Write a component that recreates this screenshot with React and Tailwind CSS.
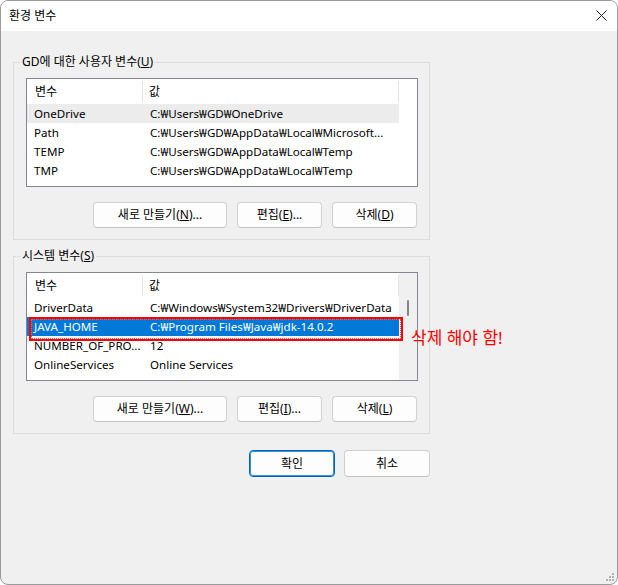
import React from "react";

const userVars = [
  { name: "OneDrive", value: "C:₩Users₩GD₩OneDrive", hover: true },
  { name: "Path", value: "C:₩Users₩GD₩AppData₩Local₩Microsoft..." },
  { name: "TEMP", value: "C:₩Users₩GD₩AppData₩Local₩Temp" },
  { name: "TMP", value: "C:₩Users₩GD₩AppData₩Local₩Temp" },
];

const sysVars = [
  { name: "DriverData", value: "C:₩Windows₩System32₩Drivers₩DriverData" },
  { name: "JAVA_HOME", value: "C:₩Program Files₩Java₩jdk-14.0.2", selected: true },
  { name: "NUMBER_OF_PRO...", value: "12" },
  { name: "OnlineServices", value: "Online Services" },
];

const Btn = ({ w, children, primary }) => (
  <button
    className={`h-[26px] ${w} rounded-[4px] bg-[#fdfdfd] text-[12px] leading-none text-black ${
      primary
        ? "border border-[#0067c0] shadow-[inset_0_0_0_1px_#3b8fd8]"
        : "border border-[#d0d0d0] border-b-[#c2c2c2]"
    }`}
  >
    {children}
  </button>
);

const VarList = ({ rows, scrollbar }) => (
  <div className="flex h-[109px] w-[392px] overflow-hidden border border-[#828790] bg-white">
    <div className="w-[372px] shrink-0">
      {/* header */}
      <div className="flex h-[25px] items-center text-[12px]">
        <div className="flex h-[21px] w-[116px] items-center border-r border-[#e5e5e5] pl-[8px]">변수</div>
        <div className="flex h-[21px] flex-1 items-center border-r border-[#e5e5e5] pl-[6px]">값</div>
      </div>
      {rows.map((r) => (
        <div
          key={r.name}
          className={`flex h-[19px] items-center text-[11.6px] ${
            r.selected ? "bg-[#0078d7] text-white" : r.hover ? "bg-[#ececec]" : ""
          }`}
        >
          <div className="w-[116px] shrink-0 truncate pl-[7px]">{r.name}</div>
          <div className="flex-1 truncate pl-[7px]">{r.value}</div>
        </div>
      ))}
    </div>
    <div className={`flex-1 ${scrollbar ? "bg-[#f0f0f0]" : "bg-white"}`}>
      {scrollbar && <div className="ml-[8px] mt-[27px] h-[16px] w-[2px] rounded-full bg-[#858585]" />}
    </div>
  </div>
);

const Group = ({ label, keyChar, rows, scrollbar, btnKeys }) => (
  <fieldset className="w-[417px] border border-[#dcdcdc] pb-[11px] pl-[12px] pr-[11px] pt-[8px]">
    <legend className="ml-[-6px] px-[2px] text-[12px] leading-[16px]">
      {label}(<span className="underline">{keyChar}</span>)
    </legend>
    <VarList rows={rows} scrollbar={scrollbar} />
    <div className="mt-[15px] flex justify-end gap-[10px] pr-[1px]">
      <Btn w="w-[134px]">
        새로 만들기(<span className="underline">{btnKeys[0]}</span>)...
      </Btn>
      <Btn w="w-[85px]">
        편집(<span className="underline">{btnKeys[1]}</span>)...
      </Btn>
      <Btn w="w-[85px]">
        삭제(<span className="underline">{btnKeys[2]}</span>)
      </Btn>
    </div>
  </fieldset>
);

export default function App() {
  return (
    <div className="relative flex h-[585px] w-[618px] flex-col overflow-hidden rounded-[8px] border border-[#9a9a9a] bg-[#f0f0f0] font-['Noto_Sans','Noto_Sans_CJK_KR',sans-serif] text-black">
      {/* title bar */}
      <div className="flex h-[30px] shrink-0 items-center justify-between bg-white pl-[8px] pr-[10px]">
        <span className="text-[12px]">환경 변수</span>
        <svg width="11" height="11" viewBox="0 0 11 11" className="mt-[-1px]">
          <path d="M0.5 0.5 L10.5 10.5 M10.5 0.5 L0.5 10.5" stroke="#1a1a1a" strokeWidth="1" />
        </svg>
      </div>

      <div className="flex flex-col pl-[12px] pt-[23px]">
        <Group label="GD에 대한 사용자 변수" keyChar="U" rows={userVars} btnKeys={["N", "E", "D"]} />
        <div className="mt-[8px]">
          <Group label="시스템 변수" keyChar="S" rows={sysVars} scrollbar btnKeys={["W", "I", "L"]} />
        </div>
        <div className="mt-[16px] flex w-[417px] justify-end gap-[9px]">
          <Btn w="w-[86px] h-[27px]" primary>
            확인
          </Btn>
          <Btn w="w-[86px] h-[27px]">취소</Btn>
        </div>
      </div>

      {/* annotation over the selected row */}
      <div className="absolute left-[28px] top-[316px] h-[24px] w-[374px] border-2 border-[#ff0000]">
        <div className="h-full w-full border border-dotted border-[#ff5050]" />
      </div>
      <div className="absolute left-[410px] top-[326px] text-[17px] leading-[22px] text-[#ff0000]">
        삭제 해야 함!
      </div>

      {/* resize grip */}
      <svg width="10" height="10" viewBox="0 0 10 10" className="absolute bottom-[2px] right-[2px]">
        <rect x="7" y="1" width="2" height="2" fill="#b0b0b0" />
        <rect x="4" y="4" width="2" height="2" fill="#b0b0b0" />
        <rect x="7" y="4" width="2" height="2" fill="#b0b0b0" />
        <rect x="1" y="7" width="2" height="2" fill="#b0b0b0" />
        <rect x="4" y="7" width="2" height="2" fill="#b0b0b0" />
        <rect x="7" y="7" width="2" height="2" fill="#b0b0b0" />
      </svg>
    </div>
  );
}
